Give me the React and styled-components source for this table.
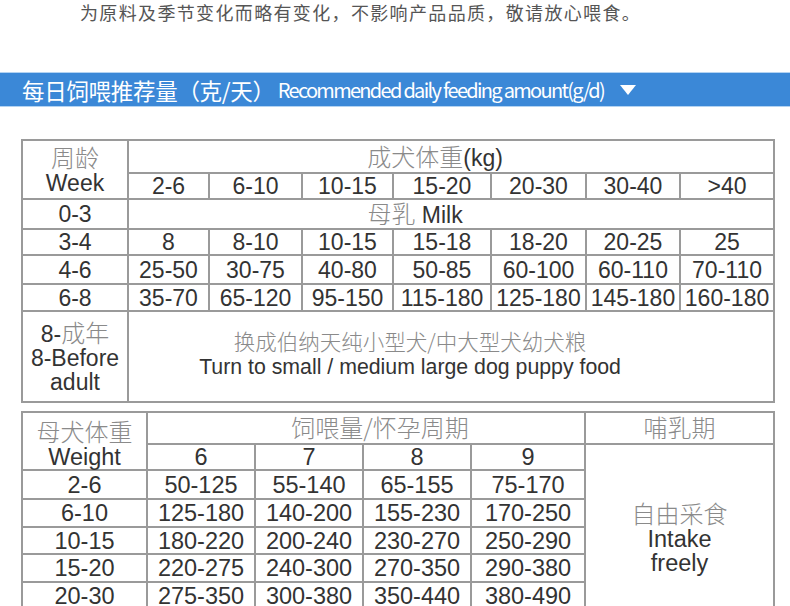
import React from "react";
import styled, { createGlobalStyle } from "styled-components";

const GlobalStyle = createGlobalStyle`
  body {
    margin: 0;
    background: #fff;
    font-family: "Liberation Sans", "Noto Sans CJK SC", sans-serif;
  }
`;

const weights = ["2-6", "6-10", "10-15", "15-20", "20-30", "30-40", ">40"];

const puppyRows = [
  ["3-4", "8", "8-10", "10-15", "15-18", "18-20", "20-25", "25"],
  ["4-6", "25-50", "30-75", "40-80", "50-85", "60-100", "60-110", "70-110"],
  ["6-8", "35-70", "65-120", "95-150", "115-180", "125-180", "145-180", "160-180"],
];

const motherRows = [
  ["2-6", "50-125", "55-140", "65-155", "75-170"],
  ["6-10", "125-180", "140-200", "155-230", "170-250"],
  ["10-15", "180-220", "200-240", "230-270", "250-290"],
  ["15-20", "220-275", "240-300", "270-350", "290-380"],
  ["20-30", "275-350", "300-380", "350-440", "380-490"],
];

const puppyCols = [106, 81, 93, 91, 98, 95, 94, 94];
const motherCols = [125, 108, 108, 108, 114, 189];

function App() {
  return (
    <Page>
      <GlobalStyle />
      <Note>为原料及季节变化而略有变化，不影响产品品质，敬请放心喂食。</Note>

      <Banner>
        <BannerCn>每日饲喂推荐量（克/天）</BannerCn>
        <BannerEn>Recommended daily feeding amount(g/d)</BannerEn>
        <Caret />
      </Banner>

      <Grid>
        <colgroup>
          {puppyCols.map((w, i) => (
            <col key={i} style={{ width: w }} />
          ))}
        </colgroup>
        <tbody>
          <Row $h={33}>
            <Cell rowSpan={2}>
              <Line>
                <Cn>周龄</Cn>
              </Line>
              <Line>Week</Line>
            </Cell>
            <Cell colSpan={7} $shift={-32}>
              <Cn>成犬体重</Cn>(kg)
            </Cell>
          </Row>
          <Row $h={25}>
            {weights.map((w) => (
              <Cell key={w}>{w}</Cell>
            ))}
          </Row>
          <Row $h={30}>
            <Cell>0-3</Cell>
            <Cell colSpan={7} $shift={-72}>
              <Cn>母乳</Cn> Milk
            </Cell>
          </Row>
          {puppyRows.map((r, i) => (
            <Row key={r[0]} $h={[26, 29, 27][i]}>
              {r.map((v, j) => (
                <Cell key={j}>{v}</Cell>
              ))}
            </Row>
          ))}
          <Row $h={91}>
            <Cell>
              <Line>
                8-<Cn>成年</Cn>
              </Line>
              <Line>8-Before</Line>
              <Line>adult</Line>
            </Cell>
            <Cell colSpan={7} $shift={-82} $small $bottom={5}>
              <Line>
                <Cn $size={21.5}>换成伯纳天纯小型犬/中大型犬幼犬粮</Cn>
              </Line>
              <Line>Turn to small / medium large dog puppy food</Line>
            </Cell>
          </Row>
        </tbody>
      </Grid>

      <Grid $gap={8} $size={23.5}>
        <colgroup>
          {motherCols.map((w, i) => (
            <col key={i} style={{ width: w }} />
          ))}
        </colgroup>
        <tbody>
          <Row $h={32}>
            <Cell rowSpan={2} $top={6}>
              <Line>
                <Cn>母犬体重</Cn>
              </Line>
              <Line>Weight</Line>
            </Cell>
            <Cell colSpan={4} $shift={28}>
              <Cn>饲喂量/怀孕周期</Cn>
            </Cell>
            <Cell>
              <Cn>哺乳期</Cn>
            </Cell>
          </Row>
          <Row $h={25}>
            <Cell>6</Cell>
            <Cell>7</Cell>
            <Cell>8</Cell>
            <Cell>9</Cell>
            <Cell rowSpan={6} $top={22}>
              <Line>
                <Cn>自由采食</Cn>
              </Line>
              <Line>Intake</Line>
              <Line>freely</Line>
            </Cell>
          </Row>
          {motherRows.map((r, i) => (
            <Row key={r[0]} $h={[29, 28, 27, 28, 28][i]}>
              {r.map((v, j) => (
                <Cell key={j}>{v}</Cell>
              ))}
            </Row>
          ))}
        </tbody>
      </Grid>
    </Page>
  );
}

const Page = styled.div`
  width: 790px;
  padding-bottom: 40px;
`;

const Note = styled.p`
  margin: 0;
  padding-left: 80px;
  font-family: "Noto Sans CJK SC", sans-serif;
  font-size: 18px;
  line-height: 24px;
  letter-spacing: 1.35px;
  color: #555;
`;

const Banner = styled.div`
  margin-top: 48px;
  height: 33px;
  display: flex;
  align-items: center;
  padding-left: 22px;
  background: #3b88d7;
  border-top: 1px solid #b3d3f2;
  border-bottom: 1px solid #b3d3f2;
  color: #fff;
  font-family: "Noto Sans CJK SC", sans-serif;
  white-space: nowrap;
`;

const BannerCn = styled.span`
  font-size: 22.5px;
  letter-spacing: -0.3px;
`;

const BannerEn = styled.span`
  margin-left: 3px;
  font-size: 20px;
  letter-spacing: -1.7px;
`;

const Caret = styled.span`
  margin-left: 16px;
  width: 0;
  height: 0;
  border-left: 8px solid transparent;
  border-right: 8px solid transparent;
  border-top: 10px solid #fff;
`;

const Grid = styled.table`
  margin: ${(p) => p.$gap || 32}px 0 0 21px;
  width: 752px;
  table-layout: fixed;
  border-collapse: collapse;
  font-size: ${(p) => p.$size || 23}px;
  color: #333;
`;

const Row = styled.tr`
  height: ${(p) => p.$h}px;
`;

const Cell = styled.td`
  border: 2px solid #9a9a9a;
  padding: ${(p) => p.$top || 0}px
    ${(p) => (p.$shift < 0 ? -p.$shift : 0)}px ${(p) => p.$bottom || 0}px
    ${(p) => (p.$shift > 0 ? p.$shift : 0)}px;
  text-align: center;
  vertical-align: middle;
  white-space: nowrap;
  overflow: visible;
  line-height: 24px;
  font-size: ${(p) => (p.$small ? "21.3px" : "inherit")};
`;

const Line = styled.span`
  display: block;
`;

const Cn = styled.span`
  font-family: "Noto Sans CJK SC", sans-serif;
  font-weight: 300;
  font-size: ${(p) => p.$size || 24}px;
  color: #8a8a8a;
`;

export default App;
